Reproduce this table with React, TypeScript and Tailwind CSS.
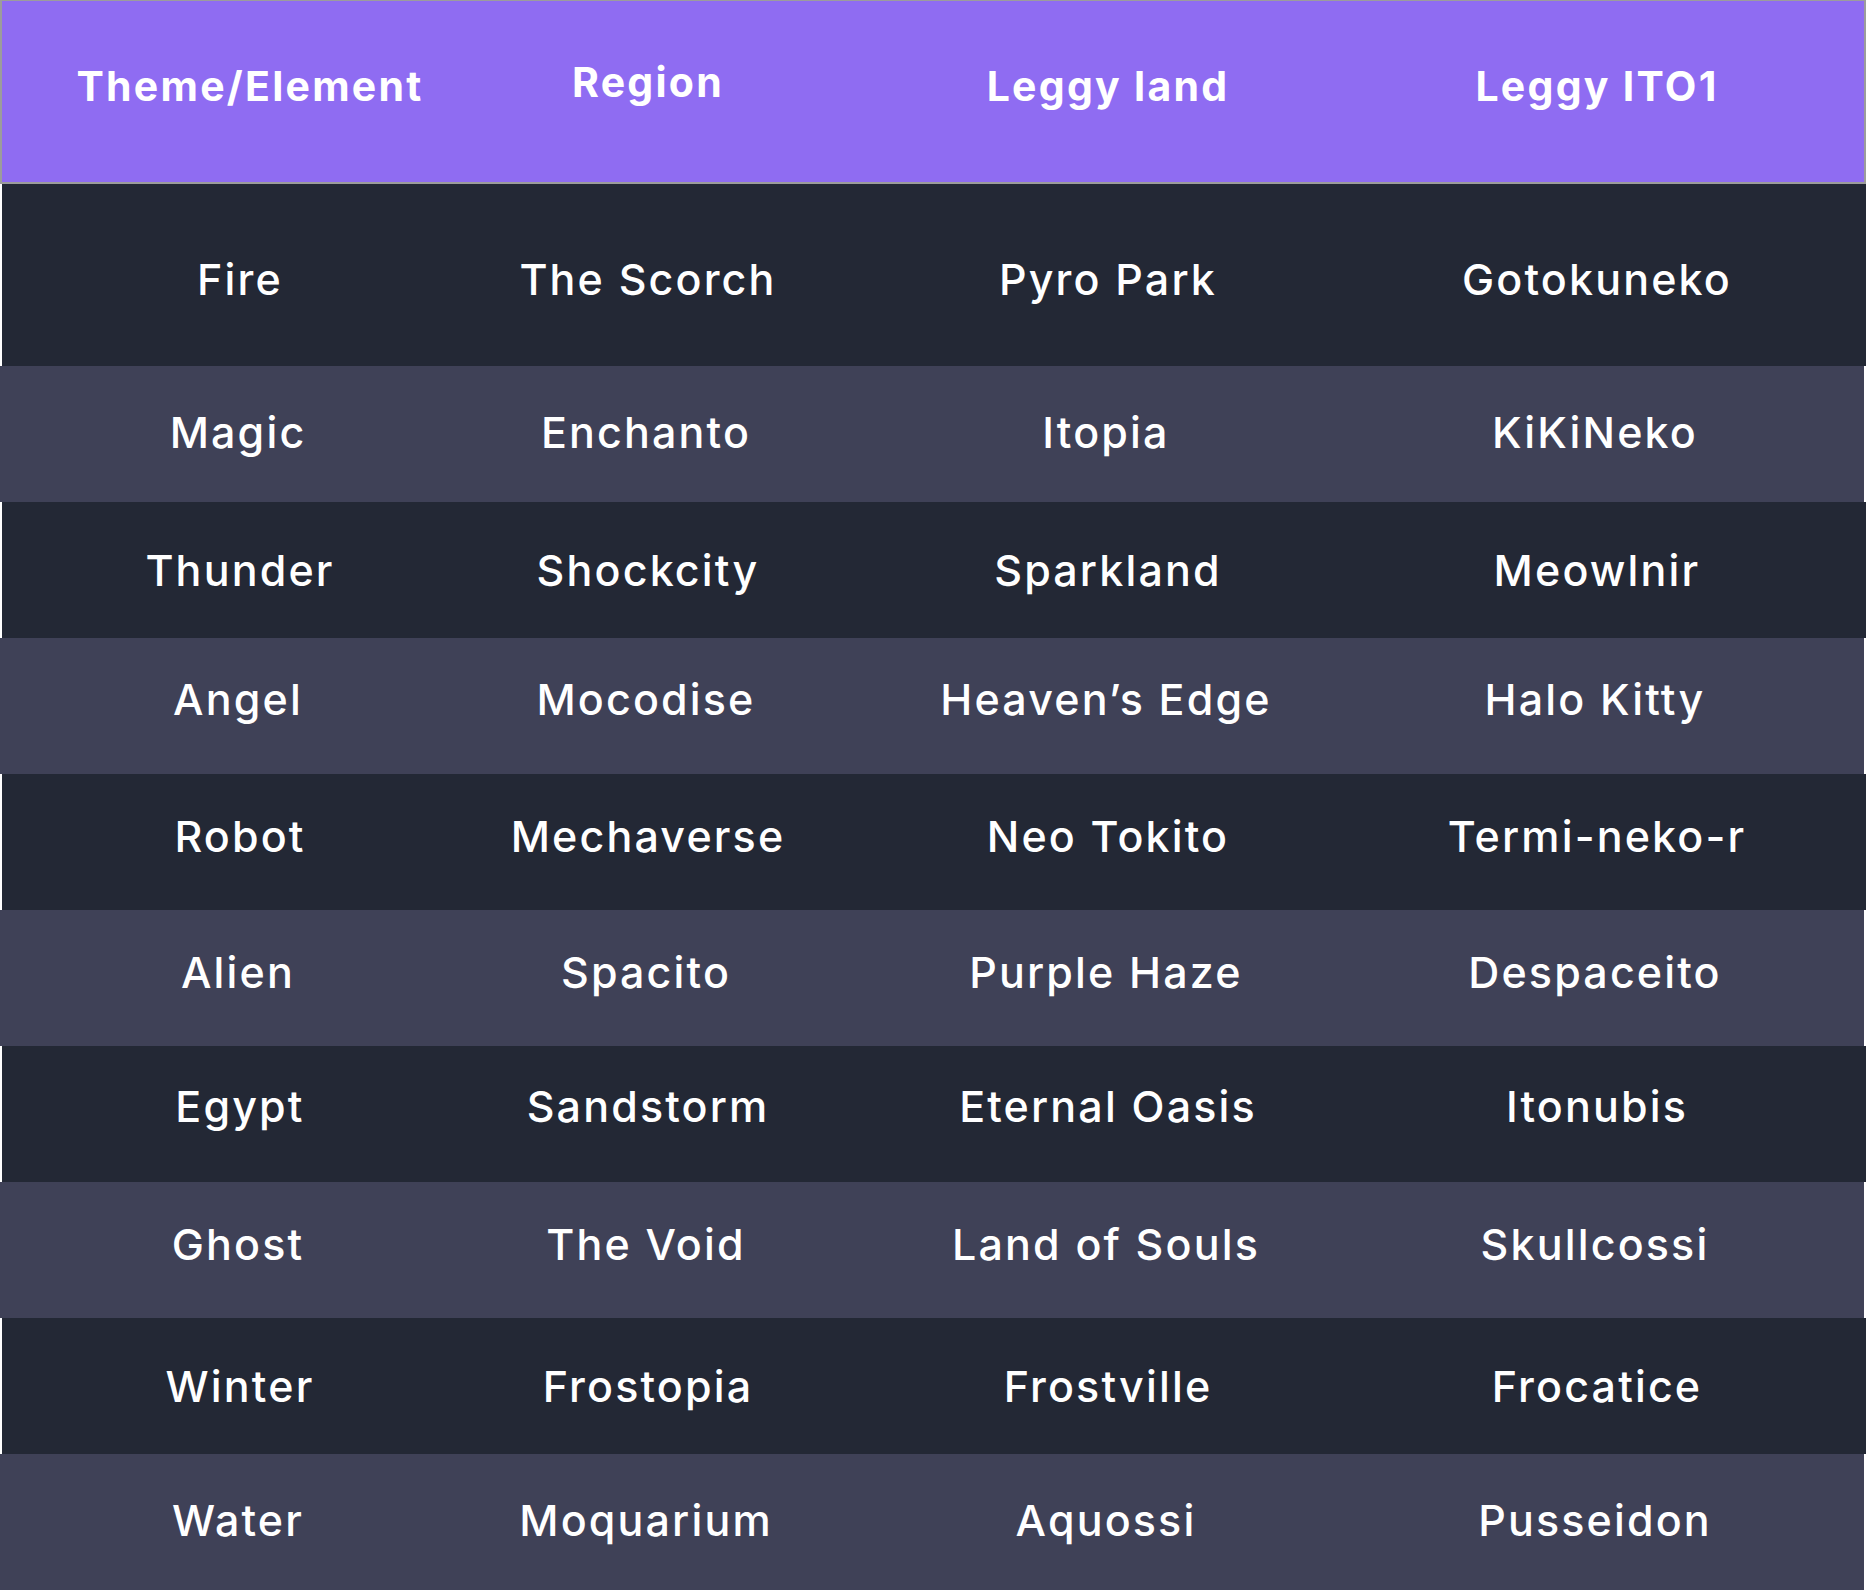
const headers = ['Theme/Element', 'Region', 'Leggy land', 'Leggy ITO1']

// the text in the source isn't quite centred row to row, so each row carries its own nudge
const rows = [
  { cells: ['Fire', 'The Scorch', 'Pyro Park', 'Gotokuneko'], nudge: 'pt-[8px]' },
  { cells: ['Magic', 'Enchanto', 'Itopia', 'KiKiNeko'], nudge: 'pb-[4px]' },
  { cells: ['Thunder', 'Shockcity', 'Sparkland', 'Meowlnir'], nudge: '' },
  { cells: ['Angel', 'Mocodise', 'Heaven’s Edge', 'Halo Kitty'], nudge: 'pb-[13px]' },
  { cells: ['Robot', 'Mechaverse', 'Neo Tokito', 'Termi-neko-r'], nudge: 'pb-[12px]' },
  { cells: ['Alien', 'Spacito', 'Purple Haze', 'Despaceito'], nudge: 'pb-[11px]' },
  { cells: ['Egypt', 'Sandstorm', 'Eternal Oasis', 'Itonubis'], nudge: 'pb-[15px]' },
  { cells: ['Ghost', 'The Void', 'Land of Souls', 'Skullcossi'], nudge: 'pb-[12px]' },
  { cells: ['Winter', 'Frostopia', 'Frostville', 'Frocatice'], nudge: '' },
  { cells: ['Water', 'Moquarium', 'Aquossi', 'Pusseidon'], nudge: 'pb-[3px]' },
]

const cols = 'grid grid-cols-[476px_340px_580px_398px_1fr] items-center'

export default function App() {
  return (
    <div className="w-[1866px] bg-white font-['Inter',sans-serif] text-white">
      <div className={`${cols} h-[184px] bg-[#8f6cf2] border-t border-l-2 border-r-2 border-b-2 border-[#9c9c9c] pb-[10px]`}>
        {headers.map((h, i) => (
          <div
            key={h}
            className={`text-center text-[41px] font-bold tracking-[0.055em] ${i === 0 ? 'pl-[20px]' : ''} ${i === 1 ? 'mb-[8px]' : ''}`}
          >
            {h}
          </div>
        ))}
      </div>
      {rows.map((r, i) => {
        const dark = i % 2 === 0
        return (
          <div
            key={r.cells[0]}
            className={`${cols} ${i === 0 ? 'h-[182px]' : 'h-[136px]'} ${r.nudge} ${
              dark ? 'ml-[2px] bg-[#232835]' : 'mr-[2px] bg-[#3f4157]'
            }`}
          >
            {r.cells.map((c) => (
              <div key={c} className="text-center text-[43px] font-medium tracking-[0.05em]">
                {c}
              </div>
            ))}
          </div>
        )
      })}
    </div>
  )
}
